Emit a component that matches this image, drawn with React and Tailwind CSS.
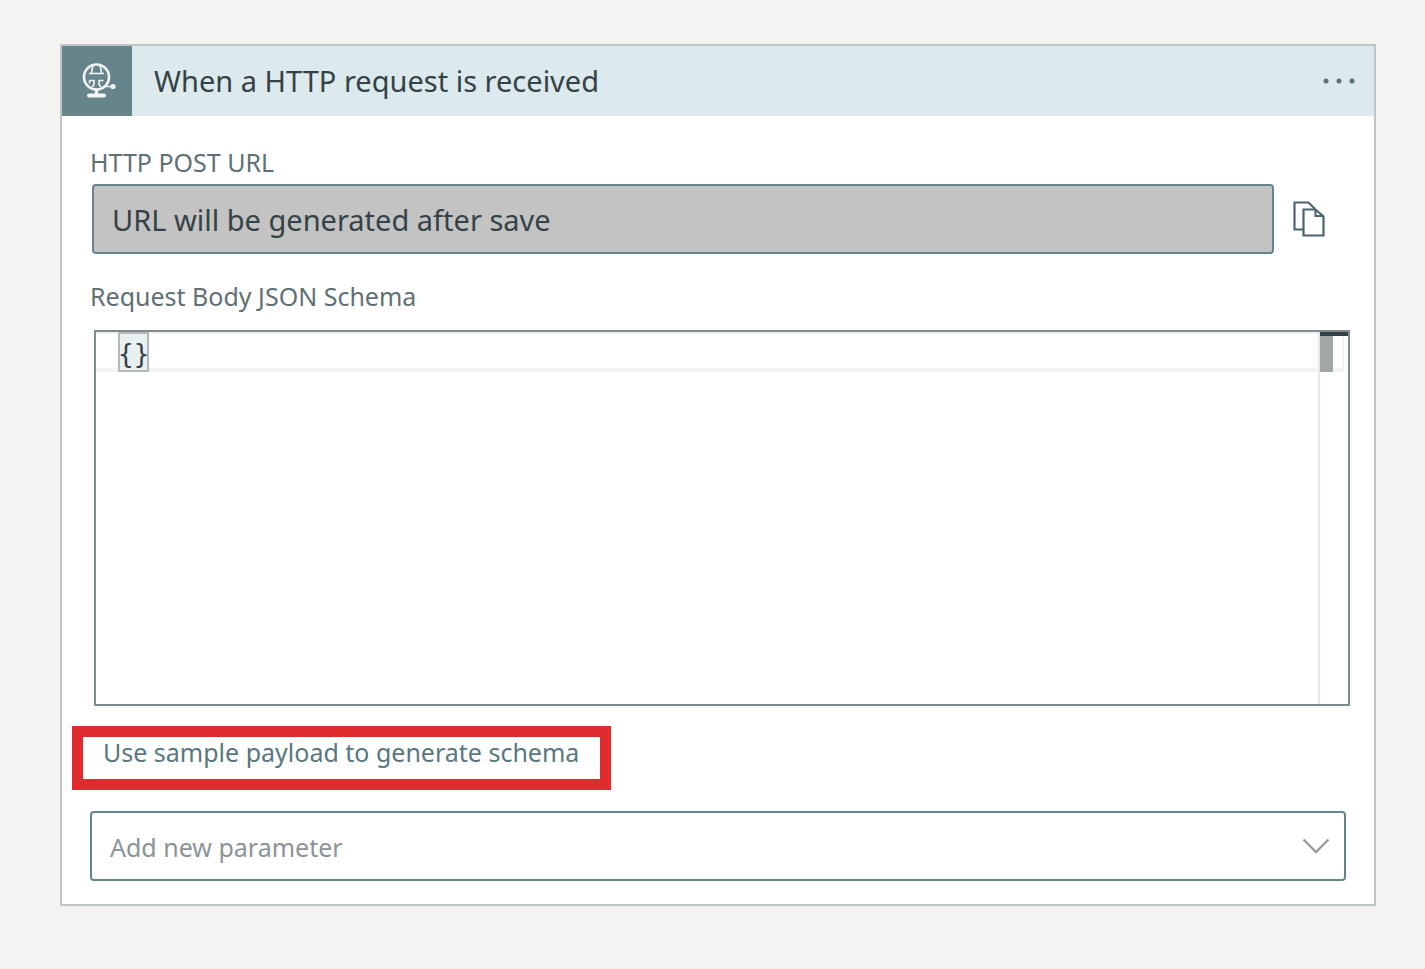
import React from "react";

function GlobeIcon() {
  return (
    <svg viewBox="0 0 34 36" className="h-9 w-[34px]" fill="none" stroke="#f4f7f8" strokeWidth="2" aria-hidden="true">
      <circle cx="14.500" cy="14" r="12.500" strokeWidth="2.6" />
      <path d="M11 2.500 10 6.500 9.500 10.500h10L19 6.500 18 2.500M7 10.500h2.500M19.500 10.500H22" strokeWidth="1.6" />
      <path d="M7.500 17.500h4.500v4l-2 2.500M7.500 17.500v3M21.500 17.500H17v4l2 2.500" strokeWidth="1.6" />
      <path d="M14.500 26v5" strokeWidth="3.4" />
      <path d="M7 32.500h15" strokeWidth="4" strokeLinecap="round" />
      <path d="M23 23.500h7" strokeWidth="1.4" />
      <circle cx="31" cy="23.500" r="2.600" fill="#f4f7f8" stroke="none" />
    </svg>
  );
}

function CopyIcon() {
  return (
    <svg viewBox="0 0 32 36" className="h-9 w-8" fill="none" stroke="#4b656c" strokeWidth="2.2" aria-hidden="true">
      <path d="M10 28.500H1.500V1.500H15.500L22 8" />
      <path d="M10.500 8.500H22.500L30.500 15.500V34.500H10.500Z" fill="#fff" />
      <path d="M22.500 8.500V15H30.500" />
    </svg>
  );
}

export default function App() {
  return (
    <main className="min-h-screen bg-[#f4f3f1] pt-11 pr-[49px] pb-16 pl-[60px] font-['Noto_Sans','Open_Sans',sans-serif]">
      <section className="border-2 border-[#bfc4c6] bg-white">
        <header className="flex h-[70px] items-center bg-[#dce9ed]">
          <div className="flex h-full w-[70px] shrink-0 items-center justify-center bg-[#66858b] pl-1">
            <GlobeIcon />
          </div>
          <h1 className="flex-1 pl-[22px] text-[29px] leading-9 text-[#344246]">When a HTTP request is received</h1>
          <button type="button" aria-label="More options" className="mr-[18px] flex h-10 items-center">
            <svg viewBox="0 0 34 6" className="h-1.5 w-[34px]" fill="#557279" aria-hidden="true">
              <circle cx="4" cy="3" r="2.500" />
              <circle cx="17" cy="3" r="2.500" />
              <circle cx="30" cy="3" r="2.500" />
            </svg>
          </button>
        </header>

        <div className="px-7 pt-7 pb-[23px]">
          <label htmlFor="post-url" className="block text-[25px] leading-9 text-[#5f7075]">HTTP POST URL</label>
          <div className="mt-1 ml-0.5 flex items-center">
            <input
              id="post-url"
              readOnly
              value="URL will be generated after save"
              className="h-[70px] min-w-0 flex-1 rounded-sm border-2 border-[#66858b] bg-[#c3c3c3] px-[18px] text-[29px] text-[#344246] outline-none"
            />
            <button type="button" aria-label="Copy URL" className="mr-[21px] ml-[19px]">
              <CopyIcon />
            </button>
          </div>

          <label htmlFor="schema" className="mt-6 block text-[25px] leading-9 text-[#5f7075]">Request Body JSON Schema</label>
          <div className="relative mt-4 -mr-1 ml-1 flex h-[376px] border-2 border-[#7f8b8e]">
            <div className="absolute top-0 right-1 left-0 h-10 border-t-2 border-r-2 border-b-4 border-[#f1f3f4]" />
            <div className="absolute top-0 left-[22px] h-10 w-[31px] border-2 border-[#b4b8b9] bg-[#e9f0f1]" />
            <textarea
              id="schema"
              defaultValue="{}"
              spellCheck={false}
              className="relative min-w-0 flex-1 resize-none bg-transparent pt-0.5 pl-[22px] font-['DejaVu_Sans_Mono',monospace] text-[26px] leading-10 text-[#344246] outline-none"
            />
            <div className="relative w-[30px] border-l-2 border-[#e0eaec]">
              <div className="h-1 bg-[#344246]" />
              <div className="h-9 w-[13px] bg-[#a3a6a7]" />
            </div>
          </div>

          <div className="mt-5 -ml-[18px] flex h-16 w-[539px] max-w-full items-start border-[11px] border-[#df2b2d] pl-5">
            <a href="#sample" className="whitespace-nowrap text-[25px] leading-[30px] text-[#58777e]">Use sample payload to generate schema</a>
          </div>

          <div className="relative mt-[21px]">
            <select
              aria-label="Add new parameter"
              className="h-[70px] w-full appearance-none rounded-sm border-2 border-[#66858b] bg-white px-[18px] pt-1 text-[25px] text-[#899497] outline-none"
            >
              <option>Add new parameter</option>
            </select>
            <svg viewBox="0 0 28 16" className="pointer-events-none absolute top-[27px] right-4 h-4 w-7" fill="none" stroke="#969c9e" strokeWidth="2.4" aria-hidden="true">
              <path d="M1.500 1.500 14 14 26.500 1.500" />
            </svg>
          </div>
        </div>
      </section>
    </main>
  );
}
